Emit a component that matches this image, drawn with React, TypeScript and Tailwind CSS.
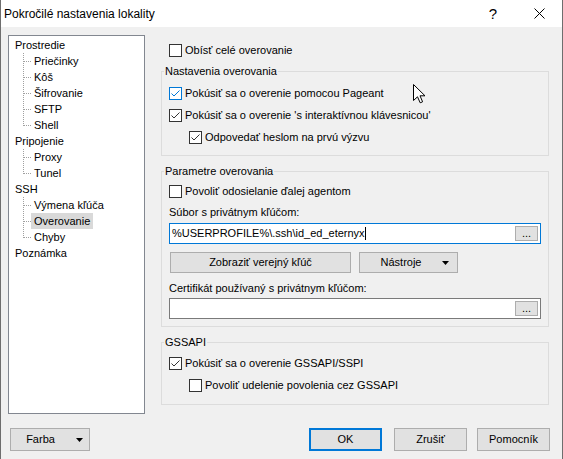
type TreeNode = { label: string; children: string[] };

const tree: TreeNode[] = [
  { label: "Prostredie", children: ["Priečinky", "Kôš", "Šifrovanie", "SFTP", "Shell"] },
  { label: "Pripojenie", children: ["Proxy", "Tunel"] },
  { label: "SSH", children: ["Výmena kľúča", "Overovanie", "Chyby"] },
  { label: "Poznámka", children: [] },
];

function Check({ checked, hot }: { checked?: boolean; hot?: boolean }) {
  const c = hot ? "#0078d7" : "#333333";
  return (
    <span
      className={`w-[13px] h-[13px] shrink-0 border bg-white flex items-center justify-center ${
        hot ? "border-[#0078d7]" : "border-[#333333]"
      }`}
    >
      {checked && (
        <svg width="11" height="11" viewBox="0 0 11 11">
          <path d="M1.5 5.5 L4 8 L9.5 2.5" stroke={c} strokeWidth="1" fill="none" />
        </svg>
      )}
    </span>
  );
}

function CheckRow({ label, checked, hot, indent }: { label: string; checked?: boolean; hot?: boolean; indent?: boolean }) {
  return (
    <div className={`h-[22px] flex items-center ${indent ? "pl-[25px]" : "pl-[5px]"}`}>
      <Check checked={checked} hot={hot} />
      <span className="ml-[3px] whitespace-nowrap">{label}</span>
    </div>
  );
}

function Arrow() {
  return (
    <svg width="8" height="4" viewBox="0 0 8 4">
      <path d="M0 0 H7 L3.5 4 Z" fill="#000" />
    </svg>
  );
}

function Browse() {
  return (
    <div className="w-[23px] h-[15px] bg-[#e1e1e1] border border-[#adadad] flex items-end justify-center leading-[11px] pb-[1px]">
      ...
    </div>
  );
}

function Group({ title, className, children }: { title: string; className?: string; children: React.ReactNode }) {
  return (
    <fieldset className={`border border-[#dcdcdc] pl-[2px] pr-[2px] w-full min-w-0 ${className ?? ""}`}>
      <legend className="px-[1px] leading-[16px]">{title}</legend>
      {children}
    </fieldset>
  );
}

function TreeConnector({ last }: { last: boolean }) {
  return (
    <svg width="16" height="16" viewBox="0 0 16 16" className="shrink-0">
      <line x1="8.5" y1="0" x2="8.5" y2={last ? 9 : 16} stroke="#a0a0a0" strokeDasharray="1 1" />
      <line x1="9" y1="8.5" x2="17" y2="8.5" stroke="#a0a0a0" strokeDasharray="1 1" />
    </svg>
  );
}

export default function App() {
  return (
    <div className="relative w-[563px] h-[459px] flex flex-col bg-[#f0f0f0] border-x border-[#6e6e6e] text-[11px] text-black font-['Liberation_Sans',Arial,sans-serif] overflow-hidden">
      {/* title bar */}
      <div className="h-[27px] bg-white flex items-center shrink-0">
        <span className="flex-1 pl-[3px] text-[12px]">Pokročilé nastavenia lokality</span>
        <span className="w-[46px] text-center text-[15px] leading-none">?</span>
        <span className="w-[46px] flex justify-center">
          <svg width="11" height="11" viewBox="0 0 11 11">
            <path d="M0.5 0.5 L10.5 10.5 M10.5 0.5 L0.5 10.5" stroke="#000" strokeWidth="1" />
          </svg>
        </span>
      </div>

      <div className="flex pt-[8px] pl-[7px]">
        {/* tree */}
        <div className="w-[137px] h-[379px] bg-white border border-[#828790] pt-[1px] pl-[6px] leading-[16px] shrink-0">
          {tree.map((n) => (
            <div key={n.label}>
              <div className="h-[16px]">{n.label}</div>
              {n.children.map((c, i) => (
                <div key={c} className="h-[16px] flex">
                  <TreeConnector last={i === n.children.length - 1} />
                  <span className={`px-[3px] ${c === "Overovanie" ? "bg-[#d9d9d9]" : ""}`}>{c}</span>
                </div>
              ))}
            </div>
          ))}
        </div>

        {/* right panel */}
        <div className="ml-[16px] w-[388px] flex flex-col">
          <div className="mt-[7px] h-[16px] flex items-center pl-[8px]">
            <Check />
            <span className="ml-[3px]">Obísť celé overovanie</span>
          </div>

          <Group title="Nastavenia overovania" className="mt-[5px] pt-[3px] pb-[7px]">
            <CheckRow label="Pokúsiť sa o overenie pomocou Pageant" checked hot />
            <CheckRow label="Pokúsiť sa o overenie 's interaktívnou klávesnicou'" checked />
            <CheckRow label="Odpovedať heslom na prvú výzvu" checked indent />
          </Group>

          <Group title="Parametre overovania" className="mt-[7px] pt-[1px] pb-[7px]">
            <CheckRow label="Povoliť odosielanie ďalej agentom" />
            <div className="h-[20px] flex items-center pl-[5px]">Súbor s privátnym kľúčom:</div>
            <div className="ml-[5px] mt-[1px] w-[372px] h-[21px] bg-white border border-[#0078d7] flex items-center pl-[2px] pr-[2px]">
              <span className="whitespace-nowrap">%USERPROFILE%\.ssh\id_ed_eternyx</span>
              <span className="w-px h-[13px] bg-black" />
              <span className="flex-1" />
              <Browse />
            </div>
            <div className="mt-[8px] ml-[6px] flex gap-[8px]">
              <div className="w-[181px] h-[21px] bg-[#e1e1e1] border border-[#adadad] flex items-center justify-center">
                Zobraziť verejný kľúč
              </div>
              <div className="w-[99px] h-[21px] bg-[#e1e1e1] border border-[#adadad] flex items-center">
                <span className="w-[82px] text-center">Nástroje</span>
                <Arrow />
              </div>
            </div>
            <div className="mt-[5px] h-[20px] flex items-center pl-[5px]">Certifikát používaný s privátnym kľúčom:</div>
            <div className="ml-[5px] w-[372px] h-[21px] bg-white border border-[#7a7a7a] flex items-center justify-end pr-[2px]">
              <Browse />
            </div>
          </Group>

          <Group title="GSSAPI" className="mt-[7px] pt-[2px] pb-[8px]">
            <CheckRow label="Pokúsiť sa o overenie GSSAPI/SSPI" checked />
            <CheckRow label="Povoliť udelenie povolenia cez GSSAPI" indent />
          </Group>
        </div>
      </div>

      {/* bottom buttons */}
      <div className="mt-[14px] flex pl-[9px] pr-[12px]">
        <div className="w-[80px] h-[23px] bg-[#e1e1e1] border border-[#adadad] flex items-center">
          <span className="w-[59px] text-center">Farba</span>
          <span className="ml-[6px] flex">
            <Arrow />
          </span>
        </div>
        <div className="flex-1" />
        <div className="w-[73px] h-[23px] bg-[#e1e1e1] border-2 border-[#0078d7] flex items-center justify-center">OK</div>
        <div className="ml-[12px] w-[73px] h-[23px] bg-[#e1e1e1] border border-[#adadad] flex items-center justify-center">Zrušiť</div>
        <div className="ml-[10px] w-[73px] h-[23px] bg-[#e1e1e1] border border-[#adadad] flex items-center justify-center">Pomocník</div>
      </div>

      {/* mouse pointer */}
      <svg className="absolute left-[412px] top-[84px]" width="13" height="20" viewBox="0 0 13 20">
        <path d="M0.5 0.5 L0.5 16.5 L4.5 12.8 L7.2 18.8 L9.6 17.8 L7 11.8 L12 11.8 Z" fill="#fff" stroke="#000" strokeWidth="1" strokeLinejoin="miter" />
      </svg>
    </div>
  );
}
